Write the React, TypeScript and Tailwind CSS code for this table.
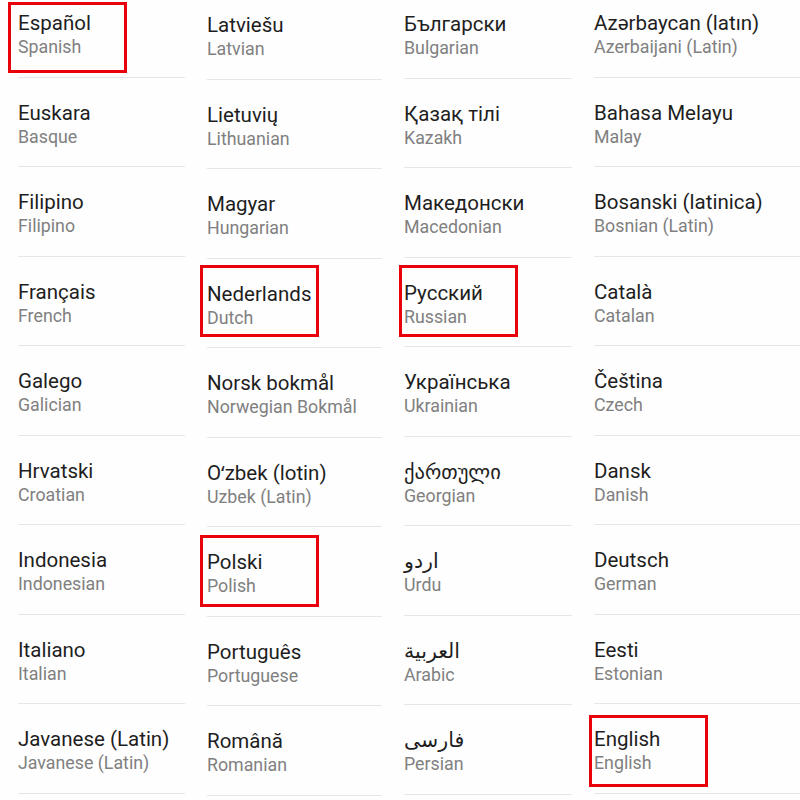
type Lang = { name: string; en: string };

const columns: { width: string; offset: string; items: Lang[] }[] = [
  {
    width: "w-[167px]",
    offset: "-mt-[12px]",
    items: [
      { name: "Español", en: "Spanish" },
      { name: "Euskara", en: "Basque" },
      { name: "Filipino", en: "Filipino" },
      { name: "Français", en: "French" },
      { name: "Galego", en: "Galician" },
      { name: "Hrvatski", en: "Croatian" },
      { name: "Indonesia", en: "Indonesian" },
      { name: "Italiano", en: "Italian" },
      { name: "Javanese (Latin)", en: "Javanese (Latin)" },
    ],
  },
  {
    width: "w-[175px]",
    offset: "-mt-[10px]",
    items: [
      { name: "Latviešu", en: "Latvian" },
      { name: "Lietuvių", en: "Lithuanian" },
      { name: "Magyar", en: "Hungarian" },
      { name: "Nederlands", en: "Dutch" },
      { name: "Norsk bokmål", en: "Norwegian Bokmål" },
      { name: "Oʻzbek (lotin)", en: "Uzbek (Latin)" },
      { name: "Polski", en: "Polish" },
      { name: "Português", en: "Portuguese" },
      { name: "Română", en: "Romanian" },
    ],
  },
  {
    width: "w-[168px]",
    offset: "-mt-[11px]",
    items: [
      { name: "Български", en: "Bulgarian" },
      { name: "Қазақ тілі", en: "Kazakh" },
      { name: "Македонски", en: "Macedonian" },
      { name: "Русский", en: "Russian" },
      { name: "Українська", en: "Ukrainian" },
      { name: "ქართული", en: "Georgian" },
      { name: "اردو", en: "Urdu" },
      { name: "العربية", en: "Arabic" },
      { name: "فارسی", en: "Persian" },
    ],
  },
  {
    width: "flex-1",
    offset: "-mt-[12px]",
    items: [
      { name: "Azərbaycan (latın)", en: "Azerbaijani (Latin)" },
      { name: "Bahasa Melayu", en: "Malay" },
      { name: "Bosanski (latinica)", en: "Bosnian (Latin)" },
      { name: "Català", en: "Catalan" },
      { name: "Čeština", en: "Czech" },
      { name: "Dansk", en: "Danish" },
      { name: "Deutsch", en: "German" },
      { name: "Eesti", en: "Estonian" },
      { name: "English", en: "English" },
    ],
  },
];

// red highlight boxes drawn over the list
const marks = [
  "left-[8px] top-[2px] w-[119px] h-[71px]",
  "left-[200px] top-[265px] w-[119px] h-[72px]",
  "left-[399px] top-[265px] w-[119px] h-[72px]",
  "left-[200px] top-[535px] w-[119px] h-[72px]",
  "left-[589px] top-[715px] w-[119px] h-[72px]",
];

function Row({ lang }: { lang: Lang }) {
  return (
    <div className="flex h-[89.5px] shrink-0 flex-col border-b border-[#e6e6e6] pt-[23px]">
      <span className="whitespace-nowrap text-[20.5px] leading-[24px] text-[#1e1e1e]">
        {lang.name}
      </span>
      <span className="whitespace-nowrap text-[17.8px] leading-[24px] text-[#808080]">
        {lang.en}
      </span>
    </div>
  );
}

export default function App() {
  return (
    <div className="relative h-[800px] w-[800px] overflow-hidden bg-[#fefefe] font-['Roboto','Noto_Sans','DejaVu_Sans',sans-serif]">
      <div className="flex gap-[22px] pl-[18px]">
        {columns.map((col, i) => (
          <div key={i} className={`flex flex-col ${col.width} ${col.offset}`}>
            {col.items.map((lang) => (
              <Row key={lang.name} lang={lang} />
            ))}
          </div>
        ))}
      </div>

      {marks.map((m) => (
        <div key={m} className={`absolute border-[3px] border-[#e8000b] ${m}`} />
      ))}
    </div>
  );
}
